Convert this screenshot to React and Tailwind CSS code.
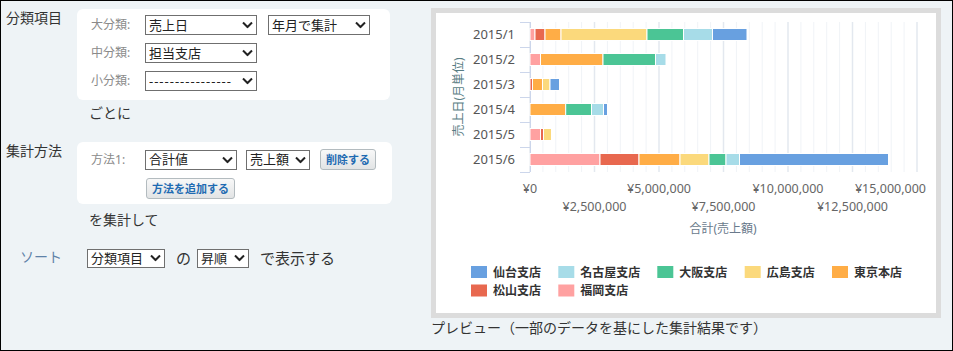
import { useState } from 'react'

const colors = {
  sendai: '#68a0e0',
  nagoya: '#a7dce8',
  osaka: '#4bc595',
  hiroshima: '#fbd97c',
  tokyo: '#ffad46',
  matsuyama: '#e8684f',
  fukuoka: '#ffa1a1',
}

const legend = [
  ['仙台支店', 'sendai'],
  ['名古屋支店', 'nagoya'],
  ['大阪支店', 'osaka'],
  ['広島支店', 'hiroshima'],
  ['東京本店', 'tokyo'],
  ['松山支店', 'matsuyama'],
  ['福岡支店', 'fukuoka'],
]

// bar segments in chart px (x from, x to)
const rows = [
  ['2015/1', [['fukuoka', 94, 99], ['matsuyama', 99, 109], ['tokyo', 109, 125], ['hiroshima', 125, 211], ['osaka', 211, 247.5], ['nagoya', 247.5, 276.5], ['sendai', 276.5, 311]]],
  ['2015/2', [['fukuoka', 94, 104.5], ['tokyo', 104.5, 167], ['osaka', 167, 219.5], ['nagoya', 219.5, 230]]],
  ['2015/3', [['matsuyama', 94, 96.5], ['tokyo', 96.5, 106.5], ['hiroshima', 106.5, 114], ['sendai', 114, 123.5]]],
  ['2015/4', [['tokyo', 94, 129.7], ['osaka', 129.7, 155.5], ['nagoya', 155.5, 167.5], ['sendai', 167.5, 171.5]]],
  ['2015/5', [['fukuoka', 94, 104.5], ['matsuyama', 104.5, 107.5], ['hiroshima', 107.5, 115.5]]],
  ['2015/6', [['fukuoka', 94, 164], ['matsuyama', 164, 203], ['tokyo', 203, 244], ['hiroshima', 244, 273], ['osaka', 273, 290], ['nagoya', 290, 303.5], ['sendai', 303.5, 452.5]]],
]

function Select({ value, width, className = '' }) {
  return (
    <div className={`relative ${className}`} style={{ width }}>
      <select
        defaultValue={value}
        className="block w-full h-full appearance-none border border-[#6f6f6f] bg-white pl-[3px] pr-5 text-[13px] text-[#222] leading-none outline-none"
      >
        <option>{value}</option>
      </select>
      <svg className="pointer-events-none absolute right-[4px] top-1/2 -translate-y-1/2" width="11" height="7" viewBox="0 0 11 7">
        <path d="M1 1 L5.5 5.5 L10 1" fill="none" stroke="#222" strokeWidth="2" />
      </svg>
    </div>
  )
}

function Button({ children }) {
  return (
    <button className="block h-[21px] px-[5px] rounded-[3px] border border-[#b3bbbf] bg-gradient-to-b from-[#f8f8f8] to-[#e2e4e5] text-[11px] font-bold text-[#1f6bb2] leading-none">
      {children}
    </button>
  )
}

function Chart() {
  const minor = Array.from({ length: 31 }, (_, k) => k)
  return (
    <svg width="500" height="300" viewBox="0 0 500 300" className="block">
      {minor.map((k) => (
        <line
          key={k}
          x1={94 + k * 12.9}
          x2={94 + k * 12.9}
          y1={9}
          y2={159}
          stroke={k % 5 === 0 ? '#e3e8ef' : '#f0f3f7'}
          strokeWidth={k % 5 === 0 ? 1.5 : 1}
        />
      ))}
      <line x1={94.5} x2={94.5} y1={9} y2={159} stroke="#ccd6eb" />
      {[9, 34, 59, 84, 109, 134, 159].map((y) => (
        <line key={y} x1={84} x2={94} y1={y + 0.5} y2={y + 0.5} stroke="#ccd6eb" />
      ))}
      {rows.map(([label, segs], i) => {
        const cy = 21.5 + i * 25
        return (
          <g key={label}>
            <text x={79} y={cy + 4.5} textAnchor="end" fontSize="13" fill="#555">
              {label}
            </text>
            {segs.map(([c, a, b]) => (
              <rect key={c} x={a} y={cy - 6} width={b - a} height={12} fill={colors[c]} stroke="#fff" strokeWidth="1" />
            ))}
          </g>
        )
      })}
      <text transform="rotate(-90 23 84)" x={23} y={88} textAnchor="middle" fontSize="12" fill="#587d84">
        売上日(月単位)
      </text>
      {[
        ['¥0', 94, 179.5, 'middle'],
        ['¥5,000,000', 223, 179.5, 'middle'],
        ['¥10,000,000', 352, 179.5, 'middle'],
        ['¥15,000,000', 490, 179.5, 'end'],
        ['¥2,500,000', 158.5, 197.5, 'middle'],
        ['¥7,500,000', 287.5, 197.5, 'middle'],
        ['¥12,500,000', 416.5, 197.5, 'middle'],
      ].map(([t, x, y, a]) => (
        <text key={t} x={x} y={y} textAnchor={a} fontSize="12.5" fill="#666">
          {t}
        </text>
      ))}
      <text x={287} y={220} textAnchor="middle" fontSize="12" fill="#6a7a8c">
        合計(売上額)
      </text>
      {legend.map(([name, c], i) => {
        const col = i % 5
        const row = Math.floor(i / 5)
        const x = [35, 122.3, 221.3, 308.7, 396][col]
        const cy = row === 0 ? 259 : 277.5
        return (
          <g key={name}>
            <rect x={x} y={cy - 6} width={16} height={12} fill={colors[c]} />
            <text x={x + 22} y={cy + 4.5} fontSize="12" fontWeight="bold" fill="#333">
              {name}
            </text>
          </g>
        )
      })}
    </svg>
  )
}

export default function App() {
  const [methods] = useState([{ fn: '合計値', field: '売上額' }])

  return (
    <div className="w-[953px] h-[351px] border border-black bg-[#eef3f6] flex font-['Noto_Sans','Noto_Sans_CJK_JP',sans-serif] text-[#333] overflow-hidden">
      <div className="w-[430px] shrink-0 pt-[8px]">
        <div className="flex">
          <div className="w-[76px] pl-[5px] text-[14px] leading-[18px]">分類項目</div>
          <div className="w-[313px] rounded-[6px] bg-white pl-[14px] pt-[6px] pb-[9px] flex flex-col gap-[8px]">
            <div className="flex items-center">
              <span className="w-[54px] text-[12px] text-[#8a8a8a]">大分類:</span>
              <Select value="売上日" width={112} className="h-[20px]" />
              <Select value="年月で集計" width={102} className="h-[20px] ml-[11px]" />
            </div>
            <div className="flex items-center">
              <span className="w-[54px] text-[12px] text-[#8a8a8a]">中分類:</span>
              <Select value="担当支店" width={112} className="h-[20px]" />
            </div>
            <div className="flex items-center">
              <span className="w-[54px] text-[12px] text-[#8a8a8a]">小分類:</span>
              <Select value="----------------" width={112} className="h-[20px] tracking-[1px]" />
            </div>
          </div>
        </div>
        <div className="pl-[88px] mt-[3px] text-[14px] leading-[20px]">ごとに</div>

        <div className="flex mt-[19px]">
          <div className="w-[76px] pl-[5px] text-[14px] leading-[18px]">集計方法</div>
          <div className="w-[315px] rounded-[6px] bg-white pl-[14px] pt-[7px] pb-[5px] flex flex-col gap-[8px]">
            {methods.map((m, i) => (
              <div key={i} className="flex items-center h-[21px]">
                <span className="w-[54px] text-[12px] text-[#8a8a8a]">方法{i + 1}:</span>
                <Select value={m.fn} width={92} className="h-[20px]" />
                <Select value={m.field} width={64} className="h-[20px] ml-[9px]" />
                <div className="ml-[10px] flex">
                  <Button>削除する</Button>
                </div>
              </div>
            ))}
            <div className="pl-[55px] flex">
              <Button>方法を追加する</Button>
            </div>
          </div>
        </div>
        <div className="pl-[88px] mt-[6px] text-[14px] leading-[20px]">を集計して</div>

        <div className="flex items-center mt-[17px]">
          <div className="w-[86px] pl-[19px] text-[14px] text-[#5e82a8] -mt-[4px]">ソート</div>
          <Select value="分類項目" width={78} className="h-[19px]" />
          <span className="ml-[11px] text-[15px]">の</span>
          <Select value="昇順" width={52} className="h-[19px] ml-[6px]" />
          <span className="ml-[11px] text-[15px]">で表示する</span>
        </div>
      </div>

      <div className="pt-[7px]">
        <div className="border-[5px] border-[#dcdcdc] bg-white">
          <Chart />
        </div>
        <div className="mt-[1px] text-[14px] leading-[18px]">プレビュー（一部のデータを基にした集計結果です）</div>
      </div>
    </div>
  )
}
